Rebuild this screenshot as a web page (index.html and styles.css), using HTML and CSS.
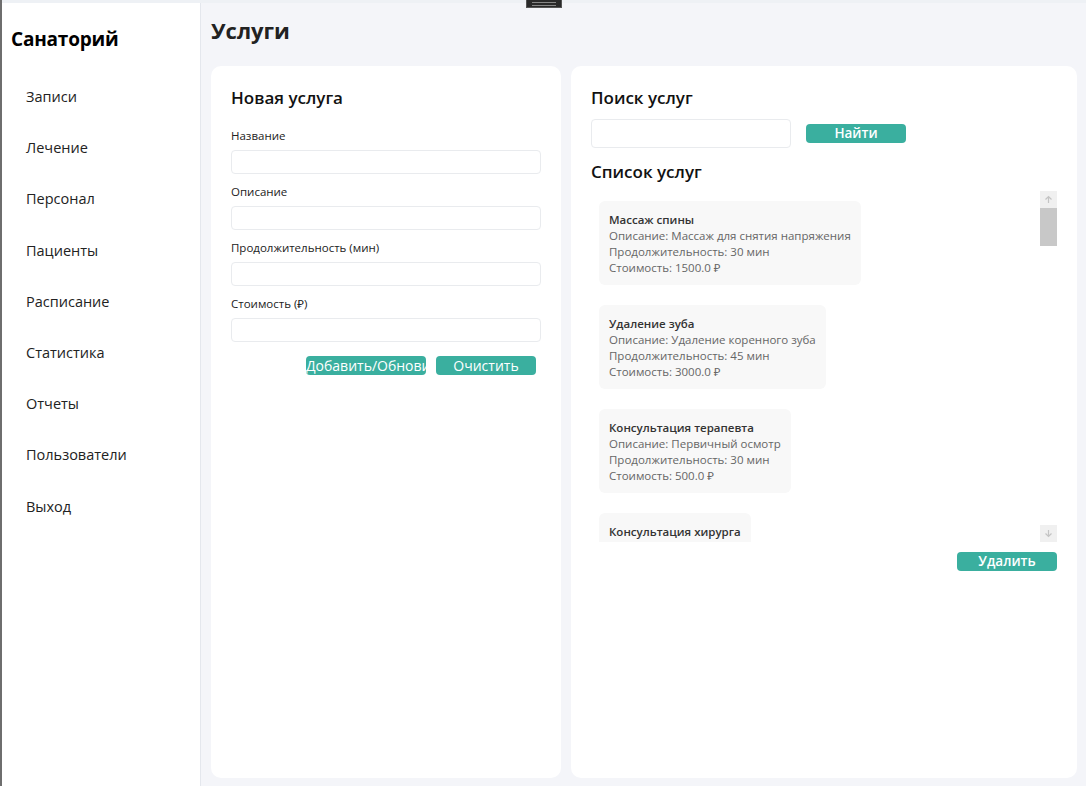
FILE: index.html
```html
<!DOCTYPE html>
<html lang="ru">
<head>
<meta charset="utf-8">
<link rel="stylesheet" href="styles.css">
</head>
<body>
<div class="handle"><span></span><span></span></div>
<div class="app">
  <aside class="sidebar">
    <div class="brand">Санаторий</div>
    <nav class="nav">
      <div class="nav-item">Записи</div>
      <div class="nav-item">Лечение</div>
      <div class="nav-item">Персонал</div>
      <div class="nav-item">Пациенты</div>
      <div class="nav-item">Расписание</div>
      <div class="nav-item">Статистика</div>
      <div class="nav-item">Отчеты</div>
      <div class="nav-item">Пользователи</div>
      <div class="nav-item">Выход</div>
    </nav>
  </aside>
  <main class="main">
    <h1 class="page-title">Услуги</h1>
    <div class="columns">
      <section class="card form-card">
        <h2 class="card-title">Новая услуга</h2>
        <div class="field"><label>Название</label><div class="input"></div></div>
        <div class="field"><label>Описание</label><div class="input"></div></div>
        <div class="field"><label>Продолжительность (мин)</label><div class="input"></div></div>
        <div class="field"><label>Стоимость (₽)</label><div class="input"></div></div>
        <div class="form-actions">
          <button class="btn btn-form btn-wide">Добавить/Обновить</button>
          <button class="btn btn-form">Очистить</button>
        </div>
      </section>
      <section class="card list-card">
        <h2 class="card-title">Поиск услуг</h2>
        <div class="search-row">
          <div class="input input-search"></div>
          <button class="btn">Найти</button>
        </div>
        <h2 class="card-title list-title">Список услуг</h2>
        <div class="list-box">
          <div class="list">
            <div class="item">
              <div class="item-name">Массаж спины</div>
              <div class="item-line">Описание: Массаж для снятия напряжения</div>
              <div class="item-line">Продолжительность: 30 мин</div>
              <div class="item-line">Стоимость: 1500.0 ₽</div>
            </div>
            <div class="item">
              <div class="item-name">Удаление зуба</div>
              <div class="item-line">Описание: Удаление коренного зуба</div>
              <div class="item-line">Продолжительность: 45 мин</div>
              <div class="item-line">Стоимость: 3000.0 ₽</div>
            </div>
            <div class="item">
              <div class="item-name">Консультация терапевта</div>
              <div class="item-line">Описание: Первичный осмотр</div>
              <div class="item-line">Продолжительность: 30 мин</div>
              <div class="item-line">Стоимость: 500.0 ₽</div>
            </div>
            <div class="item item-partial">
              <div class="item-name">Консультация хирурга</div>
            </div>
          </div>
          <div class="scrollbar">
            <div class="sb-btn"><svg width="9" height="9" viewBox="0 0 9 9"><path d="M4.5 8V1.5M1.5 4.5L4.5 1.5L7.5 4.5" fill="none" stroke="#c4c4c4" stroke-width="1.2"/></svg></div>
            <div class="sb-thumb"></div>
            <div class="sb-track"></div>
            <div class="sb-btn"><svg width="9" height="9" viewBox="0 0 9 9"><path d="M4.5 1V7.5M1.5 4.5L4.5 7.5L7.5 4.5" fill="none" stroke="#c4c4c4" stroke-width="1.2"/></svg></div>
          </div>
        </div>
        <div class="list-actions">
          <button class="btn">Удалить</button>
        </div>
      </section>
    </div>
  </main>
</div>
</body>
</html>
```
FILE: styles.css
```css
* { box-sizing: border-box; }
html, body { margin: 0; padding: 0; }
body {
  width: 1086px;
  height: 786px;
  overflow: hidden;
  background: #f4f5f9;
  font-family: "Open Sans", "Noto Sans", sans-serif;
  color: #222;
  position: relative;
}
.handle {
  position: absolute;
  left: 526px;
  top: 0;
  width: 36px;
  height: 8px;
  background: #2a2a2a;
  border: 1px solid #555;
  border-top: none;
  display: flex;
  flex-direction: column;
  align-items: center;
  justify-content: center;
  gap: 2px;
  z-index: 5;
}
.handle span { display: block; width: 24px; height: 1px; background: #888; }
.app {
  display: flex;
  height: 786px;
  padding-top: 3px;
  border-left: 2px solid #6e6e6e;
  background: #eef1f5;
}
.sidebar {
  width: 199px;
  background: #fff;
  border-right: 1px solid #e4e7ed;
  flex-shrink: 0;
}
.brand {
  font-weight: 700;
  font-size: 19px;
  padding: 23px 0 0 9px;
  height: 72px;
  color: #000;
  letter-spacing: -0.2px;
}
.nav { display: flex; flex-direction: column; }
.nav-item {
  height: 51.2px;
  padding-left: 24px;
  font-size: 14.5px;
  color: #222;
  line-height: 44px;
}
.main {
  flex: 1;
  background: #f4f5f9;
  padding: 0 9px 8px 10px;
  display: flex;
  flex-direction: column;
}
.page-title {
  margin: 0;
  font-size: 22px;
  font-weight: 700;
  color: #222;
  height: 63px;
  padding-top: 12px;
  line-height: 30px;
}
.columns { flex: 1; display: flex; gap: 10px; }
.card {
  background: #fff;
  border-radius: 10px;
  padding: 20px;
}
.form-card { width: 350px; }
.list-card { flex: 1; display: flex; flex-direction: column; }
.card-title {
  margin: 0;
  font-size: 17px;
  font-weight: 600;
  color: #111;
  line-height: 24px;
}
.form-card .card-title { margin-bottom: 17px; margin-top: 0; }
.field { display: flex; flex-direction: column; margin-bottom: 9px; }
.field label {
  font-size: 11.5px;
  color: #222;
  line-height: 18px;
  margin-bottom: 5px;
}
.input {
  height: 24px;
  border: 1px solid #e9ebee;
  border-radius: 4px;
  background: #fff;
}
.form-actions {
  display: flex;
  justify-content: flex-end;
  gap: 10px;
  padding-right: 5px;
  margin-top: 14px;
}
.btn {
  width: 100px;
  height: 19px;
  border: none;
  border-radius: 4px;
  background: #3aaf9f;
  color: #fff;
  font-family: inherit;
  font-size: 13.5px;
  font-weight: 600;
  line-height: 19px;
  padding: 0;
  overflow: hidden;
  white-space: nowrap;
  text-align: center;
}
.btn-form { font-weight: 400; font-size: 14px; }
.btn-wide { width: 120px; text-align: left; }
.search-row {
  display: flex;
  align-items: center;
  gap: 15px;
  margin-top: 9px;
}
.input-search { width: 200px; height: 29px; }
.list-title { margin-top: 12px; }
.list-box {
  display: flex;
  height: 351px;
  margin-top: 7px;
}
.list {
  flex: 1;
  overflow: hidden;
  padding: 10px 8px;
  display: flex;
  flex-direction: column;
  align-items: flex-start;
  gap: 20px;
}
.item {
  background: #f8f8f8;
  border-radius: 6px;
  padding: 11px 10px 9px;
  flex-shrink: 0;
}
.item-partial { padding-bottom: 60px; }
.item-name { font-size: 11.5px; font-weight: 600; color: #333; line-height: 16px; }
.item-line { font-size: 11.5px; color: #666; line-height: 16px; }
.scrollbar {
  width: 17px;
  display: flex;
  flex-direction: column;
}
.sb-btn {
  height: 17px;
  background: #f0f0f0;
  display: flex;
  align-items: center;
  justify-content: center;
}
.sb-thumb { height: 38px; background: #c8c8c8; }
.sb-track { flex: 1; background: #fff; }
.list-actions {
  display: flex;
  justify-content: flex-end;
  margin-top: 10px;
}
```
